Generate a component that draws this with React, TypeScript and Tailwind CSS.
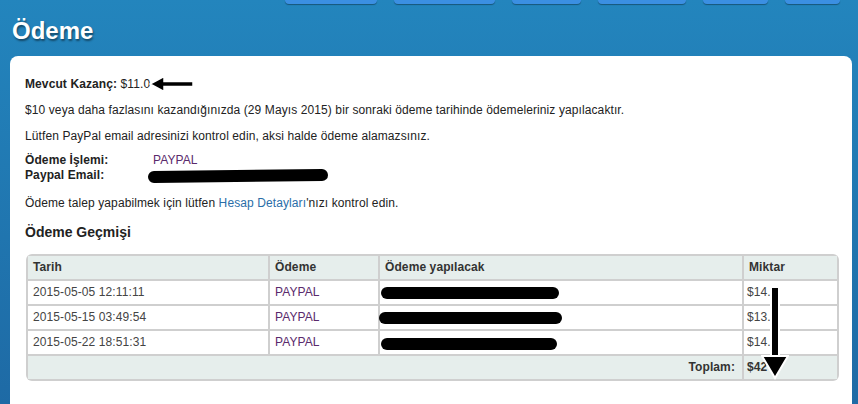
const tabs = ['w-[92px]', 'w-[101px]', 'w-[69px]', 'w-[88px]', 'w-[65px]', 'w-[55px]'];

const rows = [
  { date: '2015-05-05 12:11:11', bar: 'w-[178px] mt-[1px]', amount: '$14.' },
  { date: '2015-05-15 03:49:54', bar: 'w-[183px] -ml-[2px]', amount: '$13.' },
  { date: '2015-05-22 18:51:31', bar: 'w-[176px] mt-[2px]', amount: '$14.' },
];

function Redacted({ className }: { className: string }) {
  return <span className={`inline-block h-[12px] rounded-full bg-black align-middle ${className}`} />;
}

export default function App() {
  return (
    <div
      className="relative h-[404px] w-[858px] overflow-hidden bg-gradient-to-b from-[#2385bd] to-[#1e6aa5] text-[12px] tracking-[0.1px] text-[#222]"
      style={{ fontFamily: '"Liberation Sans", Arial, sans-serif' }}
    >
      {/* top nav tabs (cut off) */}
      <div className="flex h-[4px] gap-[17px] pl-[285px]">
        {tabs.map((w, i) => (
          <div key={i} className={`${w} h-[4px] rounded-b-[6px] bg-[#3b8fe2] shadow-[0_1px_1px_rgba(0,0,0,0.35)]`} />
        ))}
      </div>

      <h1 className="ml-[12px] mt-[13px] h-[39px] text-[24px] font-bold leading-[28px] tracking-normal text-white [text-shadow:1px_2px_2px_rgba(0,0,0,0.45)]">
        Ödeme
      </h1>

      <div className="relative ml-[10px] w-[842px] rounded-[8px] bg-white pl-[15px] pr-[13px] pt-[20px] pb-[30px]">
        <p className="leading-[16px]">
          <b>Mevcut Kazanç:</b> $11.0
        </p>
        <p className="mt-[10px] leading-[16px]">
          $10 veya daha fazlasını kazandığınızda (29 Mayıs 2015) bir sonraki ödeme tarihinde ödemeleriniz yapılacaktır.
        </p>
        <p className="mt-[10px] leading-[16px]">Lütfen PayPal email adresinizi kontrol edin, aksi halde ödeme alamazsınız.</p>

        <div className="mt-[9px] grid grid-cols-[128px_1fr] leading-[15px]">
          <b>Ödeme İşlemi:</b>
          <span className="text-[#5a2a6c]">PAYPAL</span>
          <b>Paypal Email:</b>
          <span className="-ml-[5px] flex items-center">
            <Redacted className="h-[11px] w-[180px] -rotate-[0.6deg]" />
          </span>
        </div>

        <p className="mt-[12px] leading-[16px]">
          Ödeme talep yapabilmek için lütfen <span className="text-[#2a6ea8]">Hesap Detayları</span>'nızı kontrol edin.
        </p>

        <h2 className="mt-[12px] text-[14px] font-bold leading-[18px] tracking-normal">Ödeme Geçmişi</h2>

        <div className="mt-[13px] ml-[1px] w-[813px] overflow-hidden rounded-[6px] bg-[#cfcfcf]">
          <table className="w-full border-separate border-spacing-[2px] leading-[23px]">
            <thead>
              <tr className="bg-[#e6eeec] text-left font-bold text-[#333]">
                <th className="h-[23px] w-[240px] px-[5px]">Tarih</th>
                <th className="w-[108px] px-[5px]">Ödeme</th>
                <th className="w-[362px] px-[5px]">Ödeme yapılacak</th>
                <th className="px-[5px]">Miktar</th>
              </tr>
            </thead>
            <tbody>
              {rows.map((r) => (
                <tr key={r.date} className="bg-white text-[#444]">
                  <td className="h-[22px] px-[5px]">{r.date}</td>
                  <td className="px-[5px] text-[#5a2a6c]">PAYPAL</td>
                  <td className="px-[1px]">
                    <Redacted className={r.bar} />
                  </td>
                  <td className="px-[3px]">{r.amount}</td>
                </tr>
              ))}
              <tr className="bg-[#e6eeec] font-bold text-[#333]">
                <td colSpan={3} className="h-[23px] px-[7px] text-right">
                  Toplam:
                </td>
                <td className="px-[3px]">$42</td>
              </tr>
            </tbody>
          </table>
        </div>

        {/* annotation arrows drawn over the screenshot */}
        <svg className="absolute left-[139px] top-[19px]" width="46" height="18" viewBox="0 0 46 18">
          <polygon points="1,9 15,1.5 15,6.5 44,6.5 44,11.5 15,11.5 15,16.5" fill="black" stroke="white" strokeWidth="1.5" />
        </svg>
        <svg className="absolute left-[751px] top-[230px]" width="28" height="94" viewBox="0 0 28 94">
          <rect x="9" y="0" width="10" height="72" fill="white" />
          <rect x="11" y="2" width="6" height="72" fill="black" />
          <polygon points="1,70 27,70 14,92" fill="black" stroke="white" strokeWidth="2" />
        </svg>
      </div>
    </div>
  );
}
